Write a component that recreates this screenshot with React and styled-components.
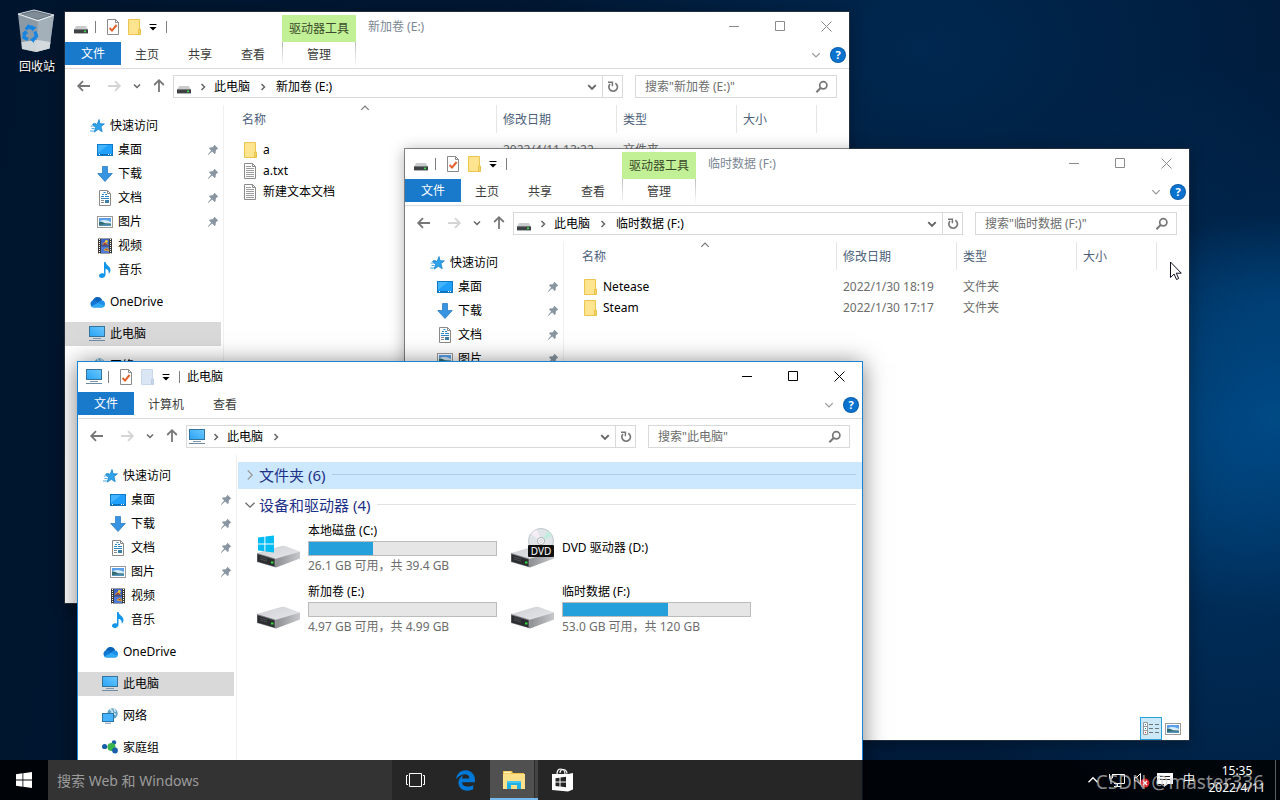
import React from "react";
import styled, { createGlobalStyle, css } from "styled-components";
import { FaEdgeLegacy } from "react-icons/fa6";

const GlobalStyle = createGlobalStyle`
  *, *::before, *::after { box-sizing: border-box; }
  html, body, #root { height: 100%; margin: 0; }
  body {
    overflow: hidden;
    background: #001a38;
    color: #000;
    font: 12px/18px "Noto Sans", "Noto Sans CJK SC", sans-serif;
  }
  button, input { font: inherit; color: inherit; }
  button { padding: 0; border: 0; background: none; cursor: default; }
  svg { display: block; flex: none; }
  ul { margin: 0; padding: 0; list-style: none; }
  h1, h2, p { margin: 0; font: inherit; }
`;

/* ---------- icons ---------- */

const DriveIcon = () => (
  <svg width="16" height="16" viewBox="0 0 16 16">
    <path d="M3.2 7h9.6l2 3.2H1.2z" fill="#c9cbcd" />
    <rect x="1" y="10" width="14" height="4.4" fill="#3f4245" />
    <rect x="1" y="10" width="14" height="1" fill="#77797b" />
    <rect x="11" y="11.6" width="2" height="1.6" fill="#35e04d" />
  </svg>
);

const ComputerIcon = () => (
  <svg width="16" height="16" viewBox="0 0 16 16">
    <defs>
      <linearGradient id="screen" x1="0" y1="1" x2="1" y2="0">
        <stop offset="0" stopColor="#29a3f5" />
        <stop offset="1" stopColor="#6cc8ff" />
      </linearGradient>
    </defs>
    <rect x="0.5" y="0.5" width="15" height="10" fill="url(#screen)" stroke="#33739c" />
    <rect x="4" y="12" width="8" height="1" fill="#7d98ae" />
    <rect x="0" y="14" width="16" height="1" fill="#6f8ba3" />
  </svg>
);

const PropertiesIcon = () => (
  <svg width="16" height="16" viewBox="0 0 16 16">
    <path d="M2.5.5h8l3 3v12h-11z" fill="#fff" stroke="#8a8a8a" />
    <path d="M10.5.5v3h3" fill="none" stroke="#8a8a8a" />
    <path d="m4.6 9 2.4 2.6L11.6 6" fill="none" stroke="#e3602b" strokeWidth="2" />
  </svg>
);

const FolderIcon = ({ faded }) => (
  <svg width="16" height="16" viewBox="0 0 16 16">
    <path
      d="M1.5.5h11v9.5h1v5.5h-12z"
      fill={faded ? "#dbe6f5" : "#ffe48f"}
      stroke={faded ? "#c9d7ea" : "#eac54f"}
    />
    <path d="M11.500 15v-4.5h2V15z" fill={faded ? "#c9d7ea" : "#f6d56b"} stroke={faded ? "#bccde4" : "#e8c34a"} />
  </svg>
);

const TextFileIcon = () => (
  <svg width="16" height="16" viewBox="0 0 16 16">
    <path d="M1.5.5h8l3 3v12h-11z" fill="#fff" stroke="#8a8a8a" />
    <path d="M9.5.5v3h3" fill="none" stroke="#8a8a8a" />
    <path d="M3 3.5h5M3 5.5h8M3 7.5h8M3 9.5h8M3 11.5h8M3 13.5h8" stroke="#9a9a9a" />
  </svg>
);

const StarIcon = () => (
  <svg width="16" height="16" viewBox="0 0 16 16">
    <path d="m10 1.500 1 4.200 4.400.2-3.400 2.700 1.200 5.100-3.900-2.400-4 2.800 1.300-4.800-3.100-2.700 4.800-.4z" fill="#2ea3ea" stroke="#1582cd" strokeWidth=".8" />
    <path d="M4 5.500h3M1.800 8h3M2.500 10.500h3M1 13h4" stroke="#4aa9e2" />
  </svg>
);

const DesktopIcon = () => (
  <svg width="16" height="16" viewBox="0 0 16 16">
    <rect x=".5" y="2.5" width="15" height="11" fill="#1ea0fb" stroke="#0c7ac9" />
    <path d="M1 11V3h10z" fill="#45b4ff" />
    <path d="M1 12.5h14" stroke="#0f6fb8" />
    <path d="M2 12.5h1M11 12.5h1M13 12.5h1" stroke="#fff" />
  </svg>
);

const DownloadIcon = () => (
  <svg width="16" height="16" viewBox="0 0 16 16">
    <path d="M5.5.5h5v7h4.8L8 15.5.7 7.5h4.8z" fill="#3694e0" stroke="#1f74be" strokeWidth=".7" />
  </svg>
);

const DocumentIcon = () => (
  <svg width="16" height="16" viewBox="0 0 16 16">
    <path d="M2.5.5h8l3 3v12h-11z" fill="#fff" stroke="#8a8a8a" />
    <path d="M10.5.5v3h3" fill="none" stroke="#8a8a8a" />
    <path d="M6.5 2.500h2M5 4.500h2M8 4.500h2M4 6.500h3M8 6.500h4M4 8.500h8" stroke="#2f86c4" />
    <path d="M4 10.500h3M4 12.500h3" stroke="#888" />
    <rect x="8" y="10" width="4" height="3" fill="#3b7ea9" />
  </svg>
);

const PictureIcon = () => (
  <svg width="16" height="16" viewBox="0 0 16 16">
    <rect x=".5" y="2.5" width="15" height="11" fill="#fff" stroke="#9a9a9a" />
    <rect x="2" y="4" width="12" height="8" fill="#5a9fe8" />
    <path d="M2 7.5q6-3 12 .5V10H2z" fill="#d7ecf9" />
    <path d="M2 7.6q3-.4 6 1.6l6 .4V12H2z" fill="#2f6b6e" />
    <path d="M2 11q6-1.4 12-.4V12H2z" fill="#5592b8" />
  </svg>
);

const VideoIcon = () => (
  <svg width="16" height="16" viewBox="0 0 16 16">
    <rect x="1" y=".5" width="14" height="15" fill="#3a3a3a" />
    <rect x="4" y="1" width="8" height="6.6" fill="#3d64c4" />
    <rect x="4" y="8.4" width="8" height="6.6" fill="#4e7bd8" />
    <path d="M5 6.5 8 4l3 3M7 12l3-2 2 3z" fill="#a33b3b" stroke="#e8b52e" strokeWidth=".8" />
    <circle cx="9.4" cy="3.4" r="1.4" fill="#f0cb35" />
    <path d="M2.5 1v15M13.5 1v15" stroke="#fff" strokeWidth="1" strokeDasharray="1 1" />
  </svg>
);

const MusicIcon = () => (
  <svg width="16" height="16" viewBox="0 0 16 16">
    <path d="M7 0h1.500c.3 3.200 5 4 5 8 0 1.700-.8 2.900-1.900 3.700.5-2.600-.4-4.200-3.100-5V12.700c0 1.800-1.700 3.300-3.700 3.300-1.700 0-2.800-.9-2.800-2.200 0-1.600 1.800-2.800 3.800-2.500L7 11.500z" fill="#1296ea" />
  </svg>
);

const CloudIcon = () => (
  <svg width="16" height="16" viewBox="0 0 16 16">
    <path d="M3.2 8.5C3.6 5 6 3 8.8 3c2.3 0 3.8 1.4 4.400 3.200L9 10z" fill="#0b63b8" />
    <path d="M3.600 13A3.600 3.600 0 0 1 3.600 6.400c2-.5 3.600.6 5 1.600L11 13z" fill="#1277d3" />
    <path d="M4 13.500 10.200 7.600c1-.9 2.400-1.500 3.700-1 1.300.5 2.100 2 2.100 3.400 0 2-1.300 3.500-3 3.500z" fill="#1c90e8" />
    <path d="M1.800 12.500 9 9l6.700 2.800c-.5 1.100-1.500 1.700-2.700 1.700H4c-.8 0-1.600-.3-2.200-1z" fill="#2fa9f3" />
  </svg>
);

const NetworkIcon = () => (
  <svg width="16" height="16" viewBox="0 0 16 16">
    <circle cx="10.5" cy="5.5" r="5.2" fill="#5fa3c5" />
    <path d="M8 1.500q3 1 2 3.500l4 1.500M12 .8l1.500 3" fill="none" stroke="#cfe6f2" strokeWidth="1.600" />
    <rect x=".5" y="5.5" width="11" height="8" fill="#45b2fb" stroke="#2b76a8" />
    <path d="M3 15.200h6" stroke="#7d98ae" />
  </svg>
);

const HomegroupIcon = () => (
  <svg width="16" height="16" viewBox="0 0 16 16">
    <path d="M3 7h6l3-4M9 8l4 3" stroke="#6aa7d0" fill="none" />
    <circle cx="2.600" cy="6.500" r="2.600" fill="#1960a8" />
    <circle cx="12" cy="2.400" r="2.200" fill="#1960a8" />
    <circle cx="9.500" cy="7" r="4" fill="#39b54a" />
    <circle cx="13" cy="10.500" r="2.900" fill="#1960a8" />
  </svg>
);

const PinIcon = () => (
  <svg width="12" height="12" viewBox="0 0 12 12">
    <path d="M7.500.8 11.200 4.500 10 5.200 8.800 6.400 8.600 9.200 7.600 10 5.200 7.600 1.200 11 .8 10.600 4.200 6.600 2 4.400 2.800 3.400 5.600 3.200 6.800 2z" fill="#8995a0" />
  </svg>
);

const Chevron = ({ dir = "down", size = 8, color = "#666", weight = 1.5 }) => {
  const d = { down: "M1 2.500 4 5.500 7 2.500", up: "M1 5.500 4 2.500 7 5.500", right: "M2.500 1 5.500 4 2.500 7" }[dir];
  return (
    <svg width={size} height={size} viewBox="0 0 8 8">
      <path d={d} fill="none" stroke={color} strokeWidth={(weight * 8) / size} />
    </svg>
  );
};

const ArrowIcon = ({ dir, color = "#777" }) => (
  <svg width="16" height="16" viewBox="0 0 16 16">
    <path
      d={{ left: "M14 8H2.500M7 3.200 2.200 8 7 12.800", right: "M2 8h11.500M9 3.200 13.800 8 9 12.800", up: "M8 14V2.500M3.200 7 8 2.200 12.800 7" }[dir]}
      fill="none"
      stroke={color}
      strokeWidth="1.800"
    />
  </svg>
);

const RefreshIcon = () => (
  <svg width="14" height="14" viewBox="0 0 14 14">
    <path d="M9.300 3.200A4.300 4.300 0 1 1 4 4" fill="none" stroke="#777" strokeWidth="1.700" />
    <path d="M2 2.200h4.400v4" fill="none" stroke="#777" strokeWidth="1.500" />
  </svg>
);

const SearchIcon = () => (
  <svg width="14" height="14" viewBox="0 0 14 14">
    <circle cx="8.300" cy="5.300" r="3.600" fill="none" stroke="#777" strokeWidth="1.700" />
    <path d="M5.600 8 1.400 12.200" stroke="#777" strokeWidth="2" />
  </svg>
);

const QuickMenuIcon = () => (
  <svg width="8" height="8" viewBox="0 0 8 8">
    <path d="M.5 1.500h7" stroke="#000" />
    <path d="M.5 4h7L4 7.500z" fill="#000" />
  </svg>
);

const CaptionIcon = ({ kind }) => (
  <svg width="11" height="11" viewBox="0 0 11 11">
    <path
      d={{ min: "M0 5.500h10", max: "M.5.5h9v9H.5z", close: "M.5.5l10 10M10.500.5l-10 10" }[kind]}
      fill="none"
      stroke="currentColor"
    />
  </svg>
);

const HardDisk = () => (
  <g>
    <defs>
      <linearGradient id="diskSide" x1="0" x2="1">
        <stop offset="0" stopColor="#8b8d90" />
        <stop offset="1" stopColor="#c6c8cb" />
      </linearGradient>
      <linearGradient id="diskTop" x1="0" y1="0" x2="1" y2="1">
        <stop offset="0" stopColor="#cfd0d4" />
        <stop offset="1" stopColor="#e8e8ec" />
      </linearGradient>
    </defs>
    <path d="M2 29 26 22q2-.4 4 0L45 27.500 20 35.500z" fill="url(#diskTop)" />
    <path d="M20 35 45 27.500v7L21 43.400z" fill="url(#diskSide)" />
    <path d="M2 29 20 34.500 21 43.400 2 38z" fill="#77797c" />
    <path d="M2.500 30.200 19.500 35.500v7L2.500 37.600z" fill="#2b2d30" />
    <path d="M5 33 12 35.200M5 35 12 37.200" stroke="#4c4f52" />
    <rect x="16" y="37.500" width="2.500" height="2" fill="#31e03f" />
  </g>
);

const DiskIcon = ({ kind }) => (
  <svg width="48" height="48" viewBox="0 0 48 48">
    <HardDisk />
    {kind === "system" && (
      <path d="M3 13.500 9.400 12.700v6.800H3zM10.400 12.500 19 11.400v8.100h-8.600zM3 20.500h6.400v6.800L3 26.400zM10.400 20.500H19v8l-8.600-1.100z" fill="#00bcf2" />
    )}
    {kind === "dvd" && (
      <g>
        <circle cx="32" cy="17" r="12.500" fill="#dfe5e8" stroke="#b4babd" strokeWidth=".8" />
        <path d="M32 17 22 10a12 12 0 0 1 6-4.500z" fill="#f5eef6" />
        <path d="M32 17 39 7a12 12 0 0 1 4 5z" fill="#c3ecdf" />
        <circle cx="32" cy="17" r="3.600" fill="#f7f8f9" stroke="#b0b5b8" />
        <circle cx="32" cy="17" r="1.400" fill="#fff" stroke="#b0b5b8" strokeWidth=".6" />
        <rect x="19" y="21" width="26" height="12" rx="1" fill="#111" />
        <text x="32" y="30.500" fill="#fff" fontSize="10" textAnchor="middle" fontFamily="Noto Sans, sans-serif">DVD</text>
      </g>
    )}
  </svg>
);

const RecycleBinIcon = () => (
  <svg width="40" height="44" viewBox="0 0 40 44">
    <path d="M1 5 17 1l20 5-4.500 33.500L19 43 5 40z" fill="#8c9aa6" />
    <path d="M1 5 17 1l20 5-16 5.500z" fill="#5b6873" />
    <path d="M4 5.500 17 2.500 33 6.200 21 10z" fill="#7f8c97" />
    <path d="M21 11.500 37 6l-4.500 33.500L19 43z" fill="#a3afb9" />
    <path d="M4.500 33 20 31l13.500 2-1 6.500L19 43 5 40z" fill="#dfe3e6" opacity=".8" />
    <path d="M1 5l20 6.500L37 6" fill="none" stroke="#e9eef2" strokeWidth="1.200" />
    <path d="M1 5 17 1l20 5" fill="none" stroke="#cdd6dd" strokeWidth="1" />
    <g fill="none" stroke="#1684e0" strokeWidth="3.400">
      <path d="M9 20.500 11.500 17.500 15 19.500" />
      <path d="M7.500 24 7 28.500l4 2" />
      <path d="M18 22.500 19.500 27l-3.500 4" />
    </g>
    <path d="M14 16l5.500 2.500-4.500 4zM5 24.500l3.500-3.500 3 4zM17 28v6l-4-3.500z" fill="#1684e0" />
  </svg>
);

const DetailsIcon = () => (
  <svg width="17" height="14" viewBox="0 0 17 14">
    <path d="M.5.5h4v12h-4zM.5 4.500h4M.5 8.500h4" fill="#fff" stroke="#999" />
    <path d="M2 2.500h1M2 6.500h1" stroke="#2d8ad0" />
    <path d="M2 10.500h1" stroke="#d02d2d" />
    <path d="M6 2.500h4M12 2.500h4M6 6.500h4M12 6.500h4M6 10.500h4M12 10.500h4" stroke="#6d7679" />
  </svg>
);

const StartIcon = () => (
  <svg width="16" height="16" viewBox="0 0 16 16" fill="#fff">
    <path d="M0 2.200 6.500 1.300v6.300H0zM7.300 1.200 16 0v7.600H7.300zM0 8.400h6.500v6.300L0 13.800zM7.300 8.400H16V16l-8.700-1.200z" />
  </svg>
);

const TaskViewIcon = () => (
  <svg width="22" height="16" viewBox="0 0 22 16" fill="none" stroke="#fff">
    <path d="M4.500 1.500h12v13h-12zM3 3.500H1.500v9H3M18 3.500h1.500v9H18" />
  </svg>
);

const ExplorerIcon = () => (
  <svg width="24" height="20" viewBox="0 0 24 20">
    <path d="M1 1h9l1 2h11v16H1z" fill="#f2c043" />
    <path d="M1 4h22v15H1z" fill="#ffe08a" />
    <path d="M2 1.700h7v1.600H2z" fill="#fff2c2" />
    <path d="M5 19v-8h14v8h-4v-4H9v4z" fill="#1fb1e6" />
    <path d="M5 11h14v2H5z" fill="#45c6f2" />
  </svg>
);

const StoreIcon = () => (
  <svg width="22" height="24" viewBox="0 0 22 24">
    <path d="M5 6C5 2 7 1 8.500 1S13 2 13 6M8 5c0-2.500 2-3.500 3.500-3.500S15 3 15 5.500" fill="none" stroke="#fff" strokeWidth="1.200" />
    <path d="M0 6h16l5-1v16.500l-5 2L0 22z" fill="#fff" />
    <path d="M3.500 10.200 7.500 9.700v3.800h-4zM8.500 9.500 14 8.800v4.700H8.500zM3.500 14.500h4v3.900l-4-.5zM8.500 14.500H14v4.800l-5.500-.8z" fill="#262626" />
  </svg>
);

const TrayNetworkIcon = () => (
  <svg width="16" height="16" viewBox="0 0 16 16" fill="none" stroke="#fff">
    <path d="M4 2.500h11.500v9H5M8.500 11.500v3M5 14.500h7" />
    <path d="M.5 2v4h3V2M2 6v6" />
  </svg>
);

const TrayVolumeIcon = () => (
  <svg width="17" height="16" viewBox="0 0 17 16">
    <path d="M1.500 5.500h2L7.500 1.500v11L3.500 9h-2z" fill="none" stroke="#fff" />
    <circle cx="12" cy="11" r="4.500" fill="#dc2430" />
    <path d="m10 9 4 4M14 9l-4 4" stroke="#fff" strokeWidth="1.200" />
  </svg>
);

const TrayMessageIcon = () => (
  <svg width="16" height="16" viewBox="0 0 16 16">
    <path d="M0 1h16v11h-5l-4 3v-3H0z" fill="#fff" />
    <path d="M3 4.500h10M3 7.500h10" stroke="#222" />
  </svg>
);

const CursorIcon = () => (
  <svg width="12" height="20" viewBox="0 0 12 20">
    <path d="M.5 1v15.500l3.600-3.500 2.400 5.500 2.200-1-2.400-5.300h5z" fill="#fff" stroke="#101022" />
  </svg>
);

/* ---------- desktop ---------- */

const Desktop = styled.div`
  position: relative;
  display: flex;
  flex-direction: column;
  height: 100vh;
  overflow: hidden;
  background:
    radial-gradient(ellipse 160px 90px at 100% 38%, rgba(0, 84, 150, 0.3), transparent),
    radial-gradient(ellipse 260px 200px at 100% 52%, rgba(0, 84, 150, 0.75), transparent),
    radial-gradient(ellipse 320px 420px at 96% 60%, rgba(0, 66, 124, 0.6), transparent),
    radial-gradient(ellipse 380px 260px at 72% 6%, rgba(0, 56, 108, 0.45), transparent),
    linear-gradient(100deg, #00152d, #001b3a 70%, #001c3c);
`;

const Shortcut = styled.button`
  display: flex;
  flex-direction: column;
  align-items: center;
  align-self: flex-start;
  gap: 5px;
  width: 74px;
  padding-top: 9px;
  color: #fff;
  text-shadow: 1px 1px 2px #000;
`;

const Taskbar = styled.footer`
  position: relative;
  z-index: 10;
  display: flex;
  height: 40px;
  margin-top: auto;
  background: rgba(0, 0, 0, 0.85);
  color: #fff;
`;

const TaskButton = styled.button`
  display: grid;
  place-items: center;
  width: 48px;
  color: #0078d7;
  ${(p) => p.$active && css`
    background: linear-gradient(90deg, #505050 44px, #2b2b2b 44px, #2b2b2b 45px, #434343 45px);
    box-shadow: inset 0 -2px #76b9ed;
  `}
`;

const TaskGroup = styled.div`
  display: flex;
  gap: 1px;
`;

const TaskSearch = styled.input`
  flex: 0 1 344px;
  min-width: 100px;
  padding: 2px 9px 0;
  border: 0;
  background: #333;
  font-size: 14px;
  &::placeholder { color: #9b9b9b; opacity: 1; }
`;

const Tray = styled.div`
  display: flex;
  align-items: center;
  gap: 8px;
  margin-left: auto;
`;

const TrayButton = styled.button`
  display: grid;
  place-items: center;
  width: 16px;
  height: 40px;
`;

const Clock = styled.time`
  width: 60px;
  margin-left: 2px;
  padding-bottom: 2px;
  line-height: 17px;
  text-align: center;
`;

const ShowDesktop = styled.button`
  width: 5px;
  height: 40px;
  border-left: 1px solid #5b5d60;
`;

const Watermark = styled.span`
  position: absolute;
  z-index: 12;
  right: 16px;
  bottom: 6px;
  color: rgba(200, 200, 200, 0.7);
  font: 19px/24px "Noto Sans", sans-serif;
`;

const Pointer = styled.div`
  position: absolute;
  z-index: 9;
  left: 1170px;
  top: 261px;
`;

/* ---------- explorer window ---------- */

const Frame = styled.section`
  position: absolute;
  left: ${(p) => p.$x}px;
  top: ${(p) => p.$y}px;
  display: flex;
  flex-direction: column;
  width: 786px;
  height: 593px;
  border: 1px solid ${(p) => (p.$active ? "#1883d7" : "rgba(60, 64, 70, 0.6)")};
  background: #fff;
  background-clip: padding-box;
  box-shadow: ${(p) => (p.$active ? "0 2px 22px rgba(0, 0, 0, 0.5)" : "0 2px 14px rgba(0, 0, 0, 0.3)")};
`;

const TitleBar = styled.header`
  display: flex;
  height: 30px;
  color: ${(p) => (p.$active ? "#000" : "#7b8794")};
`;

const QuickTools = styled.div`
  display: flex;
  align-items: center;
  width: ${(p) => (p.$wide ? "217px" : "auto")};
  padding-left: 8px;
`;

const ToolButton = styled.button`
  display: grid;
  place-items: center;
  width: ${(p) => (p.$menu ? 14 : 22)}px;
  height: 22px;
`;

const Separator = styled.span`
  width: 1px;
  height: 12px;
  margin: 0 6px;
  background: #7f7f7f;
`;

const ContextLabel = styled.span`
  width: 74px;
  margin-top: 3px;
  background: #c1f096;
  color: #3b4a2c;
  line-height: 27px;
  text-align: center;
`;

const Title = styled.h1`
  padding-left: ${(p) => (p.$wide ? "12px" : "1px")};
  line-height: 29px;
`;

const CaptionButtons = styled.div`
  display: flex;
  margin-left: auto;
  color: ${(p) => (p.$active ? "#000" : "#8b8b8b")};
`;

const CaptionButton = styled.button`
  display: grid;
  place-items: center;
  width: 46px;
  height: 29px;
  &:first-child { width: 45px; }
`;

const TabRow = styled.div`
  display: flex;
  height: 27px;
  border-bottom: 1px solid #dadbdc;
  color: #3c3c3c;
`;

const Tabs = styled.div`
  display: flex;
  gap: 1px;
  width: 217px;
`;

const Tab = styled.button`
  height: 25px;
  padding: 0 14px;
  ${(p) => p.$file && css`
    width: 56px;
    height: 23px;
    margin-right: -1px;
    background: #1979ca;
    color: #fff;
  `}
`;

const ContextTab = styled.button`
  width: 74px;
  height: 24px;
  padding-top: 2px;
  border: solid;
  border-width: 0 1px;
  border-image: linear-gradient(#b8b8b8, #fff) 1;
`;

const RibbonTools = styled.div`
  display: flex;
  align-items: center;
  gap: 10px;
  margin-left: auto;
  padding-right: 4px;
`;

const Help = styled.button`
  width: 14px;
  height: 14px;
  border-radius: 50%;
  background: #0a73d0;
  box-shadow: 0 0 0 1px #0a5ca8;
  color: #fff;
  font-size: 11px;
  font-weight: 700;
  line-height: 14px;
`;

const NavRow = styled.div`
  display: flex;
  height: 36px;
  padding: 6px 12px 0 4px;
`;

const NavButton = styled.button`
  display: grid;
  place-items: center;
  width: ${(p) => p.$w}px;
  height: 22px;
`;

const Address = styled.nav`
  display: flex;
  flex: 1;
  align-items: center;
  height: 23px;
  padding-left: 2px;
  border: 1px solid #d9d9d9;
`;

const Crumb = styled.button`
  height: 21px;
  white-space: nowrap;
`;

const CrumbArrow = styled.span`
  display: grid;
  place-items: center;
  width: ${(p) => (p.$narrow ? 22 : 26)}px;
`;

const AddressTools = styled.div`
  display: flex;
  height: 21px;
  margin-left: auto;
`;

const RefreshButton = styled.button`
  display: grid;
  place-items: center;
  width: 20px;
  border-left: 1px solid #d9d9d9;
`;

const SearchField = styled.label`
  display: flex;
  align-items: center;
  width: 202px;
  height: 23px;
  margin-left: 12px;
  padding: 1px 7px 0 9px;
  border: 1px solid #d9d9d9;
`;

const SearchInput = styled.input`
  flex: 1;
  min-width: 0;
  padding: 0;
  border: 0;
  outline: 0;
  background: none;
  &::placeholder { color: #6d6d6d; opacity: 1; }
`;

const Body = styled.div`
  display: flex;
  flex: 1;
  min-height: 0;
`;

const Sidebar = styled.aside`
  display: flex;
  flex: none;
  flex-direction: column;
  gap: 8px;
  width: 159px;
  padding: 9px 2px 0 0;
  border-right: 1px solid #f0f0f0;
  overflow: hidden;
`;

const SideItem = styled.a`
  display: flex;
  align-items: center;
  gap: 5px;
  height: 24px;
  padding: 0 2px 0 ${(p) => (p.$nested ? 32 : 24)}px;
  background: ${(p) => (p.$selected ? "#d9d9d9" : "none")};
  color: #000;
  text-decoration: none;
`;

const SideText = styled.span`
  flex: 1;
`;

const Main = styled.main`
  display: flex;
  flex: 1;
  flex-direction: column;
  min-width: 0;
`;

const FileTable = styled.table`
  width: 592px;
  border-collapse: separate;
  border-spacing: 0;
  table-layout: fixed;
  tbody::before {
    display: block;
    height: 6px;
    content: "";
  }
`;

const HeadCell = styled.th`
  position: relative;
  width: ${(p) => p.$w}px;
  height: 28px;
  padding: 2px 0 0 ${(p) => (p.$sorted ? 18 : 6)}px;
  border-right: 1px solid #e5e5e5;
  color: #4c607a;
  font-weight: 400;
  text-align: left;
`;

const SortMark = styled.span`
  position: absolute;
  left: 50%;
  top: -2px;
`;

const Cell = styled.td`
  height: 21px;
  padding: 0 0 0 6px;
  color: #6d6d6d;
`;

const NameCell = styled(Cell)`
  padding-left: 19px;
  color: #000;
`;

const FileName = styled.span`
  display: flex;
  align-items: center;
  gap: 4px;
`;

const StatusBar = styled.div`
  display: flex;
  align-items: center;
  align-self: flex-end;
  gap: 3px;
  margin-top: auto;
  padding-right: 8px;
`;

const ViewButton = styled.button`
  display: grid;
  place-items: center;
  width: ${(p) => (p.$on ? 22 : 16)}px;
  height: 23px;
  ${(p) => p.$on && css`
    border: 1px solid #2a9fd8;
    background: #cce8f6;
  `}
`;

const DeviceView = styled.div`
  padding: 7px 0 0 1px;
`;

const GroupHeader = styled.h2`
  display: flex;
  align-items: center;
  gap: 3px;
  height: 27px;
  margin-bottom: ${(p) => (p.$selected ? 3 : 0)}px;
  padding: 0 6px 2px;
  background: ${(p) => (p.$selected ? "#cce8ff" : "none")};
  color: #1e3287;
  font-size: 15px;
  &::after {
    flex: 1;
    height: 1px;
    margin-left: 4px;
    background: ${(p) => (p.$selected ? "#b0cbe4" : "#e2e2e2")};
    content: "";
  }
`;

const DriveGrid = styled.ul`
  display: grid;
  grid-template-columns: repeat(auto-fill, 254px);
  grid-auto-rows: 61px;
  padding-left: 17px;
`;

const DriveTile = styled.li`
  display: flex;
  align-items: center;
  gap: 5px;
  padding-bottom: 4px;
`;

const DriveInfo = styled.div`
  width: 189px;
  padding-top: ${(p) => (p.$plain ? 0 : 2)}px;
`;

const Meter = styled.div`
  height: 15px;
  margin: 1px 0;
  border: 1px solid #bcbcbc;
  background: #e6e6e6;
`;

const MeterFill = styled.div`
  height: 100%;
  background: #26a0da;
`;

const Caption = styled.p`
  color: #6d6d6d;
  white-space: nowrap;
`;

const sideGroups = [
  [
    { label: "快速访问", icon: StarIcon },
    { label: "桌面", icon: DesktopIcon, nested: true, pinned: true },
    { label: "下载", icon: DownloadIcon, nested: true, pinned: true },
    { label: "文档", icon: DocumentIcon, nested: true, pinned: true },
    { label: "图片", icon: PictureIcon, nested: true, pinned: true },
    { label: "视频", icon: VideoIcon, nested: true },
    { label: "音乐", icon: MusicIcon, nested: true },
  ],
  [{ label: "OneDrive", icon: CloudIcon }],
  [{ label: "此电脑", icon: ComputerIcon, selected: true }],
  [{ label: "网络", icon: NetworkIcon }],
  [{ label: "家庭组", icon: HomegroupIcon }],
];

const drives = [
  { name: "本地磁盘 (C:)", kind: "system", used: 34, caption: "26.1 GB 可用，共 39.4 GB" },
  { name: "DVD 驱动器 (D:)", kind: "dvd" },
  { name: "新加卷 (E:)", used: 0, caption: "4.97 GB 可用，共 4.99 GB" },
  { name: "临时数据 (F:)", used: 56, caption: "53.0 GB 可用，共 120 GB" },
];

function Explorer({ x, y, title, tabs, path, icon: Icon, active, context, children }) {
  return (
    <Frame $x={x} $y={y} $active={active} aria-label={title}>
      <TitleBar $active={active}>
        <QuickTools $wide={context}>
          <Icon />
          <Separator />
          <ToolButton aria-label="属性"><PropertiesIcon /></ToolButton>
          <ToolButton aria-label="新建文件夹"><FolderIcon faded={active} /></ToolButton>
          <ToolButton $menu aria-label="自定义快速访问工具栏"><QuickMenuIcon /></ToolButton>
          <Separator />
        </QuickTools>
        {context && <ContextLabel>驱动器工具</ContextLabel>}
        <Title $wide={context}>{title}</Title>
        <CaptionButtons $active={active}>
          <CaptionButton aria-label="最小化"><CaptionIcon kind="min" /></CaptionButton>
          <CaptionButton aria-label="最大化"><CaptionIcon kind="max" /></CaptionButton>
          <CaptionButton aria-label="关闭"><CaptionIcon kind="close" /></CaptionButton>
        </CaptionButtons>
      </TitleBar>
      <TabRow>
        <Tabs>
          <Tab $file>文件</Tab>
          {tabs.map((t) => <Tab key={t}>{t}</Tab>)}
        </Tabs>
        {context && <ContextTab>管理</ContextTab>}
        <RibbonTools>
          <Chevron size={10} color="#999" weight={1.3} />
          <Help aria-label="帮助">?</Help>
        </RibbonTools>
      </TabRow>
      <NavRow>
        <NavButton $w={30} aria-label="后退"><ArrowIcon dir="left" /></NavButton>
        <NavButton $w={30} aria-label="前进"><ArrowIcon dir="right" color="#d4d4d4" /></NavButton>
        <NavButton $w={16} aria-label="最近浏览的位置"><Chevron /></NavButton>
        <NavButton $w={28} aria-label="上移"><ArrowIcon dir="up" /></NavButton>
        <Address aria-label="地址">
          <Icon />
          <CrumbArrow $narrow><Chevron dir="right" /></CrumbArrow>
          {path.map((p, i) => (
            <React.Fragment key={p}>
              <Crumb>{p}</Crumb>
              {(i < path.length - 1 || path.length === 1) && <CrumbArrow><Chevron dir="right" /></CrumbArrow>}
            </React.Fragment>
          ))}
          <AddressTools>
            <NavButton $w={20} aria-label="以前的位置"><Chevron size={10} weight={2} /></NavButton>
            <RefreshButton aria-label="刷新"><RefreshIcon /></RefreshButton>
          </AddressTools>
        </Address>
        <SearchField>
          <SearchInput aria-label="搜索" placeholder={`搜索"${path[path.length - 1]}"`} />
          <SearchIcon />
        </SearchField>
      </NavRow>
      <Body>
        <Sidebar>
          {sideGroups.map((group) => (
            <div key={group[0].label}>
              {group.map(({ label, icon: SideIcon, nested, pinned, selected }) => (
                <SideItem key={label} href="#" $nested={nested} $selected={selected}>
                  <SideIcon />
                  <SideText>{label}</SideText>
                  {pinned && <PinIcon />}
                </SideItem>
              ))}
            </div>
          ))}
        </Sidebar>
        <Main>{children}</Main>
      </Body>
    </Frame>
  );
}

function FileList({ files }) {
  return (
    <>
      <FileTable>
        <thead>
          <tr>
            <HeadCell $w={273} $sorted>
              名称
              <SortMark><Chevron dir="up" size={10} color="#777" weight={1.2} /></SortMark>
            </HeadCell>
            <HeadCell $w={120}>修改日期</HeadCell>
            <HeadCell $w={120}>类型</HeadCell>
            <HeadCell $w={80}>大小</HeadCell>
          </tr>
        </thead>
        <tbody>
          {files.map((f) => (
            <tr key={f.name}>
              <NameCell>
                <FileName>{f.folder ? <FolderIcon /> : <TextFileIcon />}{f.name}</FileName>
              </NameCell>
              <Cell>{f.date}</Cell>
              <Cell>{f.folder && "文件夹"}</Cell>
              <Cell />
            </tr>
          ))}
        </tbody>
      </FileTable>
      <StatusBar>
        <ViewButton $on aria-label="详细信息"><DetailsIcon /></ViewButton>
        <ViewButton aria-label="大缩略图"><PictureIcon /></ViewButton>
      </StatusBar>
    </>
  );
}

export default function App() {
  return (
    <Desktop>
      <GlobalStyle />
      <Shortcut><RecycleBinIcon />回收站</Shortcut>

      <Explorer x={64} y={11} title="新加卷 (E:)" tabs={["主页", "共享", "查看"]} path={["此电脑", "新加卷 (E:)"]} icon={DriveIcon} context>
        <FileList
          files={[
            { name: "a", folder: true, date: "2022/4/11 12:22" },
            { name: "a.txt" },
            { name: "新建文本文档" },
          ]}
        />
      </Explorer>

      <Explorer x={404} y={148} title="临时数据 (F:)" tabs={["主页", "共享", "查看"]} path={["此电脑", "临时数据 (F:)"]} icon={DriveIcon} context>
        <FileList
          files={[
            { name: "Netease", folder: true, date: "2022/1/30 18:19" },
            { name: "Steam", folder: true, date: "2022/1/30 17:17" },
          ]}
        />
      </Explorer>

      <Explorer x={77} y={361} title="此电脑" tabs={["计算机", "查看"]} path={["此电脑"]} icon={ComputerIcon} active>
        <DeviceView>
          <GroupHeader $selected><Chevron dir="right" size={12} color="#999" weight={1.2} />文件夹 (6)</GroupHeader>
          <GroupHeader><Chevron size={12} color="#666" weight={1.2} />设备和驱动器 (4)</GroupHeader>
          <DriveGrid>
            {drives.map((d) => (
              <DriveTile key={d.name}>
                <DiskIcon kind={d.kind} />
                <DriveInfo $plain={!d.caption}>
                  <p>{d.name}</p>
                  {d.caption && (
                    <>
                      <Meter><MeterFill style={{ width: `${d.used}%` }} /></Meter>
                      <Caption>{d.caption}</Caption>
                    </>
                  )}
                </DriveInfo>
              </DriveTile>
            ))}
          </DriveGrid>
        </DeviceView>
      </Explorer>

      <Pointer><CursorIcon /></Pointer>

      <Taskbar>
        <TaskButton aria-label="开始"><StartIcon /></TaskButton>
        <TaskSearch aria-label="搜索" placeholder="搜索 Web 和 Windows" />
        <TaskGroup>
          <TaskButton aria-label="任务视图"><TaskViewIcon /></TaskButton>
          <TaskButton aria-label="Microsoft Edge"><FaEdgeLegacy size={21} /></TaskButton>
          <TaskButton $active aria-label="文件资源管理器"><ExplorerIcon /></TaskButton>
          <TaskButton aria-label="应用商店"><StoreIcon /></TaskButton>
        </TaskGroup>
        <Tray>
          <TrayButton aria-label="显示隐藏的图标"><Chevron dir="up" size={12} color="#fff" weight={1.4} /></TrayButton>
          <TrayButton aria-label="网络"><TrayNetworkIcon /></TrayButton>
          <TrayButton aria-label="音量"><TrayVolumeIcon /></TrayButton>
          <TrayButton aria-label="操作中心"><TrayMessageIcon /></TrayButton>
          <TrayButton aria-label="输入法">中</TrayButton>
          <Clock>15:35<br />2022/4/11</Clock>
          <ShowDesktop aria-label="显示桌面" />
        </Tray>
      </Taskbar>
      <Watermark>CSDN @master336</Watermark>
    </Desktop>
  );
}
